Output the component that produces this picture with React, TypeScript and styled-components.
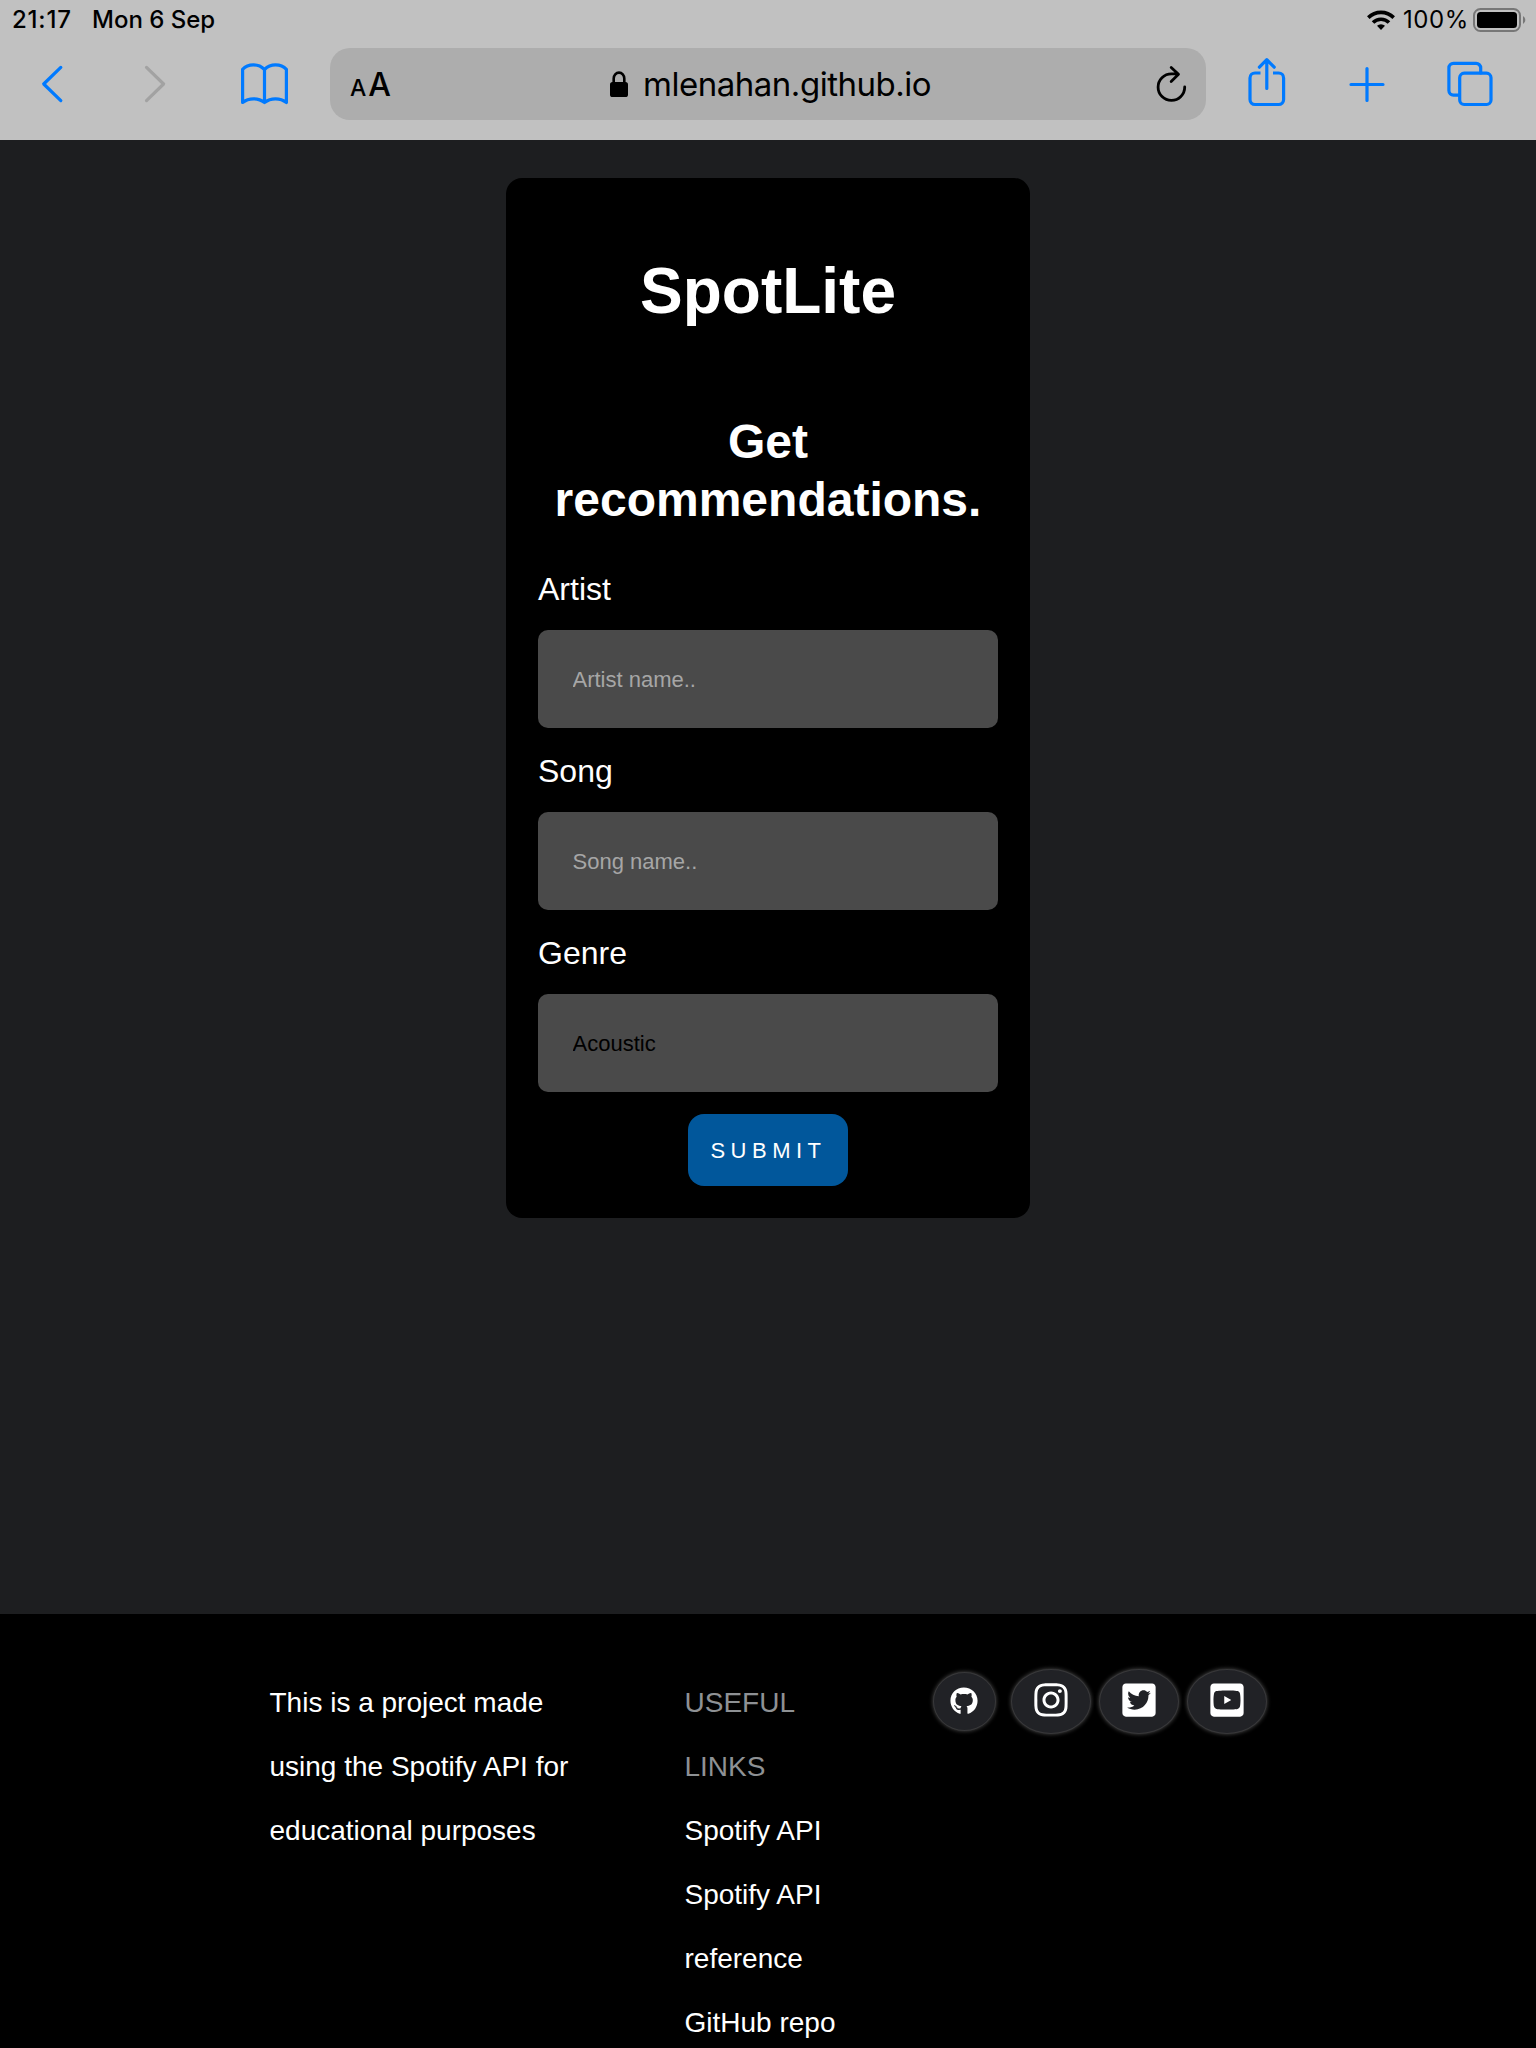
import React from 'react';
import styled, { createGlobalStyle } from 'styled-components';
import { FaGithub, FaInstagram, FaTwitterSquare, FaYoutubeSquare } from 'react-icons/fa';

const GlobalStyle = createGlobalStyle`
  *, *::before, *::after { box-sizing: border-box; }
  html, body { margin: 0; padding: 0; background: #000; }
  body { font-family: "Liberation Sans", Arial, Helvetica, sans-serif; }
`;

const BLUE = '#007aff';

const Screen = styled.div`
  width: 1536px;
  height: 2048px;
  overflow: hidden;
  display: flex;
  flex-direction: column;
  background: #1d1e20;
`;

const Chrome = styled.header`
  flex: none;
  height: 140px;
  background: #c1c1c1;
  color: #000;
  font-family: Inter, sans-serif;
`;

const StatusBar = styled.div`
  height: 48px;
  padding: 0 9px 8px 12px;
  display: flex;
  align-items: center;
  font-size: 24px;
  font-weight: 500;
  line-height: 40px;
  white-space: nowrap;
`;

const Clock = styled.span`
  width: 80px;
  letter-spacing: 0.8px;
`;

const DateText = styled.span`
  flex: 1;
  letter-spacing: 0;
`;

const Percent = styled.span`
  margin: 0 4px 0 8px;
  font-weight: 400;
  letter-spacing: 0.6px;
`;

const Toolbar = styled.div`
  display: grid;
  grid-template-columns: 104px 102px 117px 7px 876px 122px 77px 127px;
  grid-template-rows: 72px;
`;

const ToolButton = styled.button`
  border: 0;
  padding: 0;
  background: none;
  display: flex;
  align-items: center;
  justify-content: center;
`;

const Stroke = styled.svg<{ $color?: string; $weight?: number }>`
  display: block;
  fill: none;
  stroke: ${(p) => p.$color ?? BLUE};
  stroke-width: ${(p) => p.$weight ?? 3.2};
  stroke-linecap: round;
  stroke-linejoin: round;
`;

const AddressBar = styled.div`
  grid-column: 5;
  display: flex;
  align-items: center;
  height: 72px;
  padding: 0 18px 0 20px;
  border-radius: 20px;
  background: #adadad;
`;

const TextSize = styled.span`
  width: 260px;
  padding-top: 1px;
  font-size: 32px;
  font-weight: 500;
  line-height: 72px;
  white-space: nowrap;
`;

const SmallA = styled.span`
  font-size: 23px;
  line-height: 1;
  margin-right: 2px;
`;

const Address = styled.div`
  display: flex;
  align-items: center;
  gap: 15px;
  flex: 1;
  font-size: 33px;
  letter-spacing: -0.48px;
  line-height: 72px;
`;

const Main = styled.main`
  flex: none;
  height: 1474px;
  padding-top: 38px;
  display: flex;
  justify-content: center;
  align-items: flex-start;
`;

const Card = styled.form`
  width: 524px;
  height: 1040px;
  padding: 32px;
  display: flex;
  flex-direction: column;
  border-radius: 16px;
  background: #000;
  color: #fff;
`;

const Title = styled.h1`
  margin: 43px 0 0;
  font-size: 64px;
  line-height: 76px;
  text-align: center;
`;

const Subtitle = styled.h2`
  margin: 84px 0 17px;
  font-size: 48px;
  line-height: 58px;
  text-align: center;
`;

const Label = styled.label`
  margin: 25px 0 23px;
  font-size: 32px;
  line-height: 36px;
`;

const Field = styled.input`
  appearance: none;
  flex: none;
  width: 100%;
  height: 98px;
  margin: 0;
  border: 0;
  border-radius: 10px;
  padding: 2px 34px 0 34.5px;
  background: #4a4a4a;
  color: #000;
  font: 22px "Liberation Sans", Arial, sans-serif;
  &::placeholder { color: #a6a6a6; opacity: 1; }
`;

const Select = styled(Field)`
  padding-top: 0;
`;

const Submit = styled.button`
  align-self: center;
  width: 160px;
  height: 72px;
  margin-top: 22px;
  padding: 2px 0 0 1px;
  border: 0;
  border-radius: 16px;
  background: #01579b;
  color: #fff;
  font: 22px "Liberation Sans", Arial, sans-serif;
  letter-spacing: 5.5px;
`;

const Footer = styled.footer`
  flex: 1;
  display: grid;
  grid-template-columns: 415px 248px 1fr;
  padding: 57px 0 0 269.5px;
  background: #000;
  color: #fff;
  font-size: 28px;
  line-height: 64px;
`;

const About = styled.p`
  margin: 0;
  width: 320px;
`;

const Links = styled.nav`
  display: flex;
  flex-direction: column;
  width: 160px;
`;

const LinksHeading = styled.span`
  width: 130px;
  color: #8e9194;
`;

const FooterLink = styled.a`
  color: #fff;
  text-decoration: none;
`;

const Social = styled.div`
  display: flex;
  align-items: center;
  height: 61px;
  gap: 8px;
`;

const Bubble = styled.a<{ $small?: boolean }>`
  flex: none;
  display: flex;
  align-items: center;
  justify-content: center;
  width: ${(p) => (p.$small ? 63 : 80)}px;
  height: ${(p) => (p.$small ? 59 : 65)}px;
  margin-right: ${(p) => (p.$small ? 7.5 : 0)}px;
  padding-bottom: ${(p) => (p.$small ? 1.5 : 4)}px;
  border: 1px solid #38383a;
  border-radius: 50%;
  background: #212226;
  box-shadow: 0 0 4px #4f4f4f;
  color: #fff;
  font-size: ${(p) => (p.$small ? 28 : 38)}px;
  line-height: 0;
`;

const WifiIcon = () => (
  <svg width="28" height="20" viewBox="0 0 28 20" fill="none" stroke="#000" strokeWidth="3.6">
    <path d="M1.3 7.6a18 18 0 0 1 25.4 0" />
    <path d="M6 12.6a11.3 11.3 0 0 1 16 0" />
    <path d="M14 20l-4-4.2a5.8 5.8 0 0 1 8 0z" fill="#000" stroke="none" />
  </svg>
);

const BatteryIcon = () => (
  <svg width="54" height="24" viewBox="0 0 54 24">
    <rect x="1" y="1" width="46" height="22" rx="6.5" fill="none" stroke="#777" strokeWidth="2" />
    <rect x="4" y="4" width="40" height="16" rx="3.5" />
    <path d="M50 8a4.6 4.6 0 0 1 0 8z" fill="#777" />
  </svg>
);

const LockIcon = () => (
  <svg width="18" height="26" viewBox="0 0 18 26">
    <path d="M3.7 13V7.5a5.3 5.9 0 0 1 10.6 0V13" fill="none" stroke="#000" strokeWidth="2.6" />
    <rect y="11" width="18" height="15" rx="2.6" />
  </svg>
);

export default function App() {
  return (
    <Screen>
      <GlobalStyle />
      <Chrome>
        <StatusBar>
          <Clock>21:17</Clock>
          <DateText>Mon 6 Sep</DateText>
          <WifiIcon />
          <Percent>100%</Percent>
          <BatteryIcon />
        </StatusBar>
        <Toolbar>
          <ToolButton aria-label="Back">
            <Stroke width="24" height="72" viewBox="40 48 24 72">
              <path d="M60.8 67.4L43.7 84l17.1 16.6" />
            </Stroke>
          </ToolButton>
          <ToolButton aria-label="Forward">
            <Stroke $color="#a2a2a2" width="24" height="72" viewBox="143 48 24 72">
              <path d="M146.5 67.4L163.6 84l-17.1 16.6" />
            </Stroke>
          </ToolButton>
          <ToolButton aria-label="Bookmarks">
            <Stroke width="50" height="72" viewBox="240 48 50 72">
              <path d="M264.5 69.5c-3-3-6.500-4.600-11-4.600s-8.200 1.500-10.900 4.400V102.500c3-2.400 6.400-3.700 10.900-3.700s8 1.300 11 3.700c3-2.400 6.500-3.700 11-3.700s7.900 1.300 10.900 3.700V69.300c-2.700-2.900-6.400-4.400-10.900-4.400s-8 1.600-11 4.600zV102.500" />
            </Stroke>
          </ToolButton>
          <AddressBar>
            <TextSize>
              <SmallA>A</SmallA>A
            </TextSize>
            <Address>
              <LockIcon />
              mlenahan.github.io
            </Address>
            <Stroke $color="#000" $weight={2.8} width="34" height="72" viewBox="1154 48 34 72">
              <path d="M1184.700 87a13.300 13.300 0 1 1-13.300-13.200h6.200M1171.200 67.500l7.300 6.800-7.300 7.200" />
            </Stroke>
          </AddressBar>
          <ToolButton aria-label="Share">
            <Stroke width="40" height="72" viewBox="1247 48 40 72">
              <path strokeLinecap="butt" d="M1260.500 73h-5.500a5 5 0 0 0-5 5v21.500a5 5 0 0 0 5 5h23.600a5 5 0 0 0 5-5V78a5 5 0 0 0-5-5H1273" />
              <path d="M1266.800 88.500V60M1259.400 67.200l7.400-7.500 7.400 7.500" />
            </Stroke>
          </ToolButton>
          <ToolButton aria-label="New tab">
            <Stroke width="40" height="72" viewBox="1346.500 48 40 72">
              <path d="M1350.500 84.500h32M1366.500 68.500v32" />
            </Stroke>
          </ToolButton>
          <ToolButton aria-label="Tabs">
            <Stroke width="50" height="72" viewBox="1443.500 48 50 72">
              <rect x="1459.200" y="73.200" width="31.300" height="31.300" rx="4.500" />
              <path d="M1480.200 73v-5a4.600 4.600 0 0 0-4.600-4.600H1453a4.600 4.600 0 0 0-4.600 4.600v22.600a4.600 4.600 0 0 0 4.600 4.600h6" />
            </Stroke>
          </ToolButton>
        </Toolbar>
      </Chrome>

      <Main>
        <Card onSubmit={(e) => e.preventDefault()}>
          <Title>SpotLite</Title>
          <Subtitle>Get recommendations.</Subtitle>
          <Label htmlFor="artist">Artist</Label>
          <Field id="artist" placeholder="Artist name.." />
          <Label htmlFor="song">Song</Label>
          <Field id="song" placeholder="Song name.." />
          <Label htmlFor="genre">Genre</Label>
          <Select as="select" id="genre">
            <option>Acoustic</option>
          </Select>
          <Submit type="submit">SUBMIT</Submit>
        </Card>
      </Main>

      <Footer>
        <About>This is a project made using the Spotify API for educational purposes</About>
        <Links>
          <LinksHeading>USEFUL LINKS</LinksHeading>
          <FooterLink href="#">Spotify API</FooterLink>
          <FooterLink href="#">Spotify API reference</FooterLink>
          <FooterLink href="#">GitHub repo</FooterLink>
        </Links>
        <Social>
          <Bubble $small href="#" aria-label="GitHub"><FaGithub /></Bubble>
          <Bubble href="#" aria-label="Instagram"><FaInstagram /></Bubble>
          <Bubble href="#" aria-label="Twitter"><FaTwitterSquare /></Bubble>
          <Bubble href="#" aria-label="YouTube"><FaYoutubeSquare /></Bubble>
        </Social>
      </Footer>
    </Screen>
  );
}
